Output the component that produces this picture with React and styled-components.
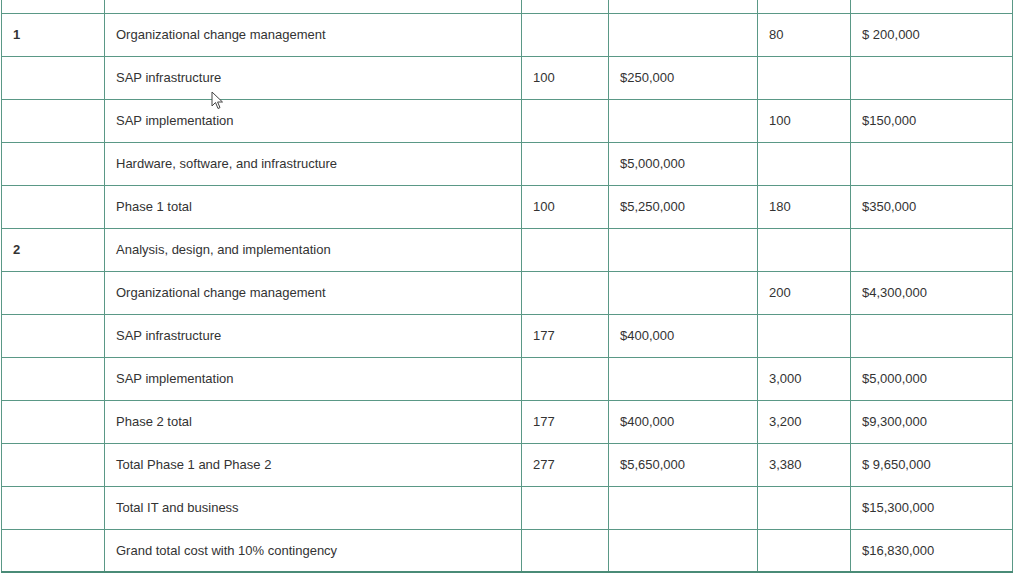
import React from 'react';
import styled, { createGlobalStyle } from 'styled-components';

const GlobalStyle = createGlobalStyle`
  html, body {
    margin: 0;
    padding: 0;
    background: #ffffff;
  }
  body {
    font-family: "Liberation Sans", Arial, sans-serif;
  }
`;

const Page = styled.div`
  position: relative;
  width: 1024px;
  height: 575px;
  overflow: hidden;
  padding-left: 1px;
  box-sizing: border-box;
`;

const CostTable = styled.table`
  border-collapse: collapse;
  table-layout: fixed;
  width: 1011px;
  border-bottom: 2px solid #4a8b77;
`;

const Row = styled.tr`
  height: ${(p) => (p.$edge ? '13px' : '43px')};
`;

const Cell = styled.td`
  border: 1px solid #5a9886;
  border-top: ${(p) => (p.$edge ? 'none' : '1px solid #5a9886')};
  padding: 0 11px;
  font-size: 13px;
  color: #333333;
  font-weight: ${(p) => (p.$bold ? 700 : 400)};
  vertical-align: middle;
  white-space: nowrap;
  overflow: hidden;
`;

const PhaseCell = styled(Cell)`
  padding-left: 11px;
`;

const Cursor = styled.svg`
  position: absolute;
  left: 211px;
  top: 91px;
  width: 13px;
  height: 19px;
  pointer-events: none;
`;

const columns = [103, 417, 87, 149, 93, 162];

const rows = [
  ['1', 'Organizational change management', '', '', '80', '$ 200,000'],
  ['', 'SAP infrastructure', '100', '$250,000', '', ''],
  ['', 'SAP implementation', '', '', '100', '$150,000'],
  ['', 'Hardware, software, and infrastructure', '', '$5,000,000', '', ''],
  ['', 'Phase 1 total', '100', '$5,250,000', '180', '$350,000'],
  ['2', 'Analysis, design, and implementation', '', '', '', ''],
  ['', 'Organizational change management', '', '', '200', '$4,300,000'],
  ['', 'SAP infrastructure', '177', '$400,000', '', ''],
  ['', 'SAP implementation', '', '', '3,000', '$5,000,000'],
  ['', 'Phase 2 total', '177', '$400,000', '3,200', '$9,300,000'],
  ['', 'Total Phase 1 and Phase 2', '277', '$5,650,000', '3,380', '$ 9,650,000'],
  ['', 'Total IT and business', '', '', '', '$15,300,000'],
  ['', 'Grand total cost with 10% contingency', '', '', '', '$16,830,000'],
];

export default function App() {
  return (
    <Page>
      <GlobalStyle />
      <CostTable>
        <colgroup>
          {columns.map((w, i) => (
            <col key={i} style={{ width: w }} />
          ))}
        </colgroup>
        <tbody>
          <Row $edge>
            {columns.map((_, i) => (
              <Cell key={i} $edge />
            ))}
          </Row>
          {rows.map((r, i) => (
            <Row key={i}>
              <PhaseCell $bold>{r[0]}</PhaseCell>
              {r.slice(1).map((v, j) => (
                <Cell key={j}>{v}</Cell>
              ))}
            </Row>
          ))}
        </tbody>
      </CostTable>
      <Cursor viewBox="0 0 13 19">
        <path
          d="M1 1 L1 15 L4.5 11.5 L7 17.5 L9 16.6 L6.6 11 L11.5 11 Z"
          fill="#ffffff"
          stroke="#444444"
          strokeWidth="1"
          strokeLinejoin="round"
        />
      </Cursor>
    </Page>
  );
}
